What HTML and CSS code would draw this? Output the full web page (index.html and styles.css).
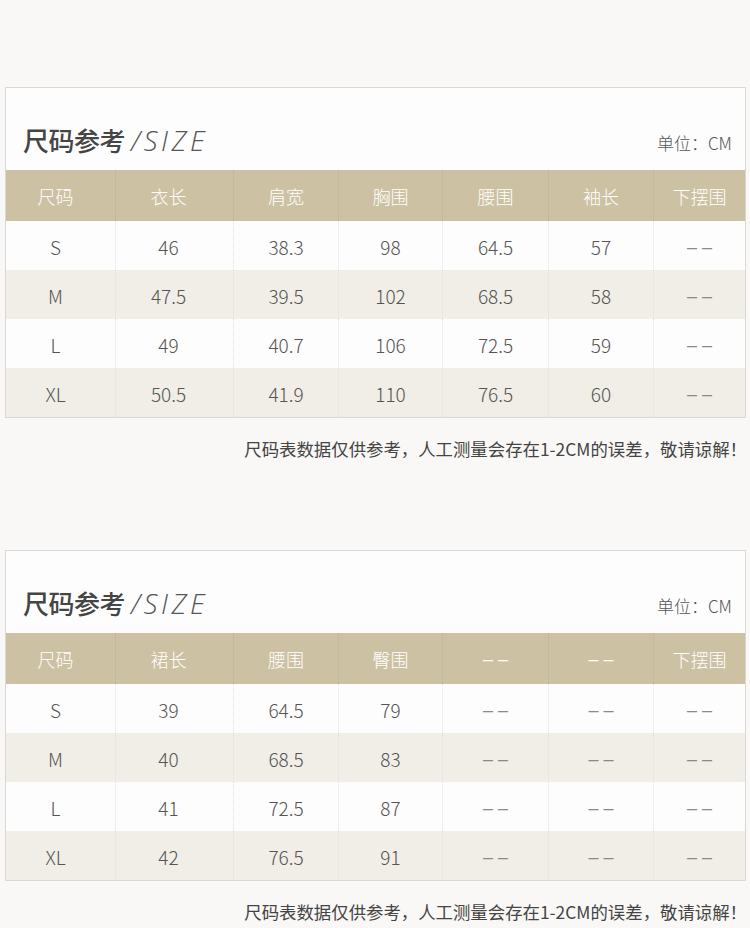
FILE: index.html
```html
<!DOCTYPE html>
<html lang="zh-CN">
<head>
<meta charset="utf-8">
<title>尺码参考</title>
<link rel="stylesheet" href="styles.css">
</head>
<body>
<main class="page">
  <section class="card">
    <div class="card-head">
      <h2 class="title"><span class="title-cn">尺码参考</span><span class="title-en">/SIZE</span></h2>
      <span class="unit">单位：CM</span>
    </div>
    <div class="grid">
      <div class="row row-head"><span>尺码</span><span>衣长</span><span>肩宽</span><span>胸围</span><span>腰围</span><span>袖长</span><span>下摆围</span></div>
      <div class="row"><span>S</span><span>46</span><span>38.3</span><span>98</span><span>64.5</span><span>57</span><span class="dash">––</span></div>
      <div class="row row-alt"><span>M</span><span>47.5</span><span>39.5</span><span>102</span><span>68.5</span><span>58</span><span class="dash">––</span></div>
      <div class="row"><span>L</span><span>49</span><span>40.7</span><span>106</span><span>72.5</span><span>59</span><span class="dash">––</span></div>
      <div class="row row-alt"><span>XL</span><span>50.5</span><span>41.9</span><span>110</span><span>76.5</span><span>60</span><span class="dash">––</span></div>
    </div>
  </section>
  <p class="note">尺码表数据仅供参考，人工测量会存在1-2CM的误差，敬请谅解！</p>

  <section class="card card-second">
    <div class="card-head">
      <h2 class="title"><span class="title-cn">尺码参考</span><span class="title-en">/SIZE</span></h2>
      <span class="unit">单位：CM</span>
    </div>
    <div class="grid">
      <div class="row row-head"><span>尺码</span><span>裙长</span><span>腰围</span><span>臀围</span><span class="dash">––</span><span class="dash">––</span><span>下摆围</span></div>
      <div class="row"><span>S</span><span>39</span><span>64.5</span><span>79</span><span class="dash">––</span><span class="dash">––</span><span class="dash">––</span></div>
      <div class="row row-alt"><span>M</span><span>40</span><span>68.5</span><span>83</span><span class="dash">––</span><span class="dash">––</span><span class="dash">––</span></div>
      <div class="row"><span>L</span><span>41</span><span>72.5</span><span>87</span><span class="dash">––</span><span class="dash">––</span><span class="dash">––</span></div>
      <div class="row row-alt"><span>XL</span><span>42</span><span>76.5</span><span>91</span><span class="dash">––</span><span class="dash">––</span><span class="dash">––</span></div>
    </div>
  </section>
  <p class="note">尺码表数据仅供参考，人工测量会存在1-2CM的误差，敬请谅解！</p>
</main>
</body>
</html>
```
FILE: styles.css
```css
* { box-sizing: border-box; }
html, body {
  margin: 0;
  padding: 0;
  background: #f9f8f6;
}
body {
  font-family: "Noto Sans CJK SC", "Liberation Sans", sans-serif;
  color: #555;
}
.page {
  padding-top: 87px;
}
.card {
  margin-left: 5px;
  width: 741px;
  border: 1px solid #d9d8d6;
  background: #fefdfd;
}
.card-second {
  margin-top: 90px;
}
.card-head {
  height: 82px;
  display: flex;
  align-items: flex-end;
  justify-content: space-between;
  padding: 0 13px 13px 17px;
}
.title {
  margin: 0;
  font-weight: normal;
  line-height: 34px;
  display: flex;
  align-items: baseline;
}
.title-cn {
  font-family: "Noto Sans CJK SC", sans-serif;
  font-size: 26px;
  font-weight: 500;
  color: #454545;
  letter-spacing: -0.5px;
}
.title-en {
  font-family: "Open Sans", "Liberation Sans", sans-serif;
  font-style: italic;
  font-weight: 300;
  font-size: 28px;
  color: #555;
  margin-left: 6px;
  letter-spacing: 3.5px;
}
.unit {
  font-family: "Noto Sans CJK SC", sans-serif;
  font-weight: 300;
  font-size: 17px;
  color: #555;
  line-height: 22px;
  margin-bottom: 3px;
}
.grid {
  display: flex;
  flex-direction: column;
}
.row {
  display: grid;
  grid-template-columns: 109px 118px 105px 104px 106px 105px 1fr;
  height: 49px;
  font-size: 19px;
  font-weight: 300;
  color: #555;
}
.row span {
  display: flex;
  align-items: center;
  justify-content: center;
  padding-top: 2px;
  border-left: 1px dotted #e2e0dc;
}
.row span:nth-child(1) {
  border-left: none;
  padding-right: 10px;
}
.row span:nth-child(2) {
  padding-right: 12px;
}
.row-head {
  height: 51px;
  background: #cdc1a3;
  color: #fff;
  font-size: 18px;
  font-weight: 300;
}
.row-head span {
  padding-top: 0;
  border-left: 1px dotted #bcb092;
}
.row-alt {
  background: #f1eee8;
}
.row .dash {
  font-family: "Liberation Sans", sans-serif;
  font-weight: normal;
  color: #8a8a8a;
  letter-spacing: 5px;
  text-indent: 5px;
  font-size: 18px;
  padding-top: 4px;
}
.row-head .dash {
  color: #fff;
  padding-top: 2px;
}
.note {
  margin: 0;
  padding: 20px 3px 0 0;
  text-align: right;
  font-size: 17.4px;
  line-height: 22px;
  color: #444;
}
```
